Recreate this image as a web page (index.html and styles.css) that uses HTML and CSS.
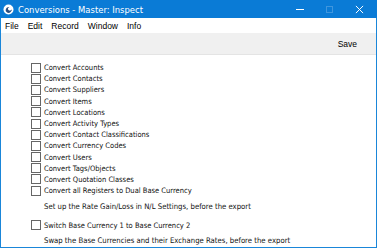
FILE: index.html
```html
<!DOCTYPE html>
<html>
<head>
<meta charset="utf-8">
<link rel="stylesheet" href="styles.css">
</head>
<body>
<div class="window">
  <div class="titlebar">
    <svg class="appicon" width="11" height="11" viewBox="0 0 11 11">
      <circle cx="5.5" cy="5.5" r="5" fill="#fff"/>
      <path d="M3 7.5 C2 5 4 2.5 6.5 3 C5 3.5 4.5 5 5.5 6 C6.5 7 8.5 6.5 9 5 C9 7.5 6.5 9.5 4.5 8.8 Z" fill="#2b4f80"/>
    </svg>
    <span class="title">Conversions - Master: Inspect</span>
    <div class="controls">
      <span class="ctl min"></span>
      <span class="ctl max"></span>
      <svg class="ctl close" width="10" height="10" viewBox="0 0 10 10"><path d="M1 1 L9 9 M9 1 L1 9" stroke="#fff" stroke-width="1.1"/></svg>
    </div>
  </div>
  <div class="menubar">
    <span>File</span><span>Edit</span><span>Record</span><span>Window</span><span>Info</span>
  </div>
  <div class="toolbar"><span class="save">Save</span></div>
  <div class="content">
    <div class="row"><span class="cb"></span>Convert Accounts</div>
    <div class="row"><span class="cb"></span>Convert Contacts</div>
    <div class="row"><span class="cb"></span>Convert Suppliers</div>
    <div class="row"><span class="cb"></span>Convert Items</div>
    <div class="row"><span class="cb"></span>Convert Locations</div>
    <div class="row"><span class="cb"></span>Convert Activity Types</div>
    <div class="row"><span class="cb"></span>Convert Contact Classifications</div>
    <div class="row"><span class="cb"></span>Convert Currency Codes</div>
    <div class="row"><span class="cb"></span>Convert Users</div>
    <div class="row"><span class="cb"></span>Convert Tags/Objects</div>
    <div class="row"><span class="cb"></span>Convert Quotation Classes</div>
    <div class="row"><span class="cb"></span>Convert all Registers to Dual Base Currency</div>
    <div class="note first">Set up the Rate Gain/Loss in N/L Settings, before the export</div>
    <div class="row switch"><span class="cb"></span>Switch Base Currency 1 to Base Currency 2</div>
    <div class="note">Swap the Base Currencies and their Exchange Rates, before the export</div>
  </div>
</div>
</body>
</html>
```
FILE: styles.css
```css
* { box-sizing: border-box; }
html, body { margin: 0; padding: 0; }
body {
  width: 377px;
  height: 248px;
  overflow: hidden;
  font-family: "Liberation Sans", sans-serif;
  background: #fff;
}
.window {
  width: 377px;
  height: 248px;
  border: 1px solid #1a86d9;
  border-top: none;
  display: flex;
  flex-direction: column;
}
.titlebar {
  height: 18px;
  margin: 0 -1px;
  background: #0a7bd6;
  display: flex;
  align-items: center;
  padding-left: 3px;
  color: #fff;
  flex: none;
}
.appicon { flex: none; }
.title {
  margin-left: 4px;
  font-family: "DejaVu Sans Condensed", "DejaVu Sans", sans-serif;
  font-stretch: condensed;
  font-size: 9.4px;
  color: #fff;
}
.controls {
  margin-left: auto;
  display: flex;
  align-items: center;
  gap: 22px;
  padding-right: 13px;
}
.ctl { display: block; }
.min { width: 8px; height: 1px; background: #fff; }
.max { width: 7px; height: 7px; border: 1px solid #3f96de; }
.close { width: 9px; height: 9px; }
.menubar {
  height: 15px;
  flex: none;
  display: flex;
  align-items: center;
  padding-left: 4px;
  gap: 9px;
  font-size: 8.5px;
  color: #000;
  background: #fff;
}
.toolbar {
  height: 22px;
  flex: none;
  background: #f0f0f0;
  border-bottom: 1px solid #e4e4e4;
  display: flex;
  align-items: center;
  justify-content: flex-end;
  padding-right: 19px;
  font-size: 8.5px;
  color: #000;
}
.content {
  flex: 1;
  padding: 7px 0 0 30px;
  font-family: "DejaVu Sans Condensed", "DejaVu Sans", sans-serif;
  font-stretch: condensed;
  font-size: 7.5px;
  color: #111;
}
.row {
  height: 11.2px;
  display: flex;
  align-items: center;
  white-space: nowrap;
}
.cb {
  width: 10px;
  height: 10px;
  border: 1px solid #666;
  background: #fff;
  margin-right: 3px;
  flex: none;
}
.note {
  padding-left: 13px;
  height: 17px;
  line-height: 17px;
  white-space: nowrap;
  font-size: 7.7px;
}
.note.first { margin-top: 2px; }
.switch { margin-top: 3px; height: 14px; }
```
